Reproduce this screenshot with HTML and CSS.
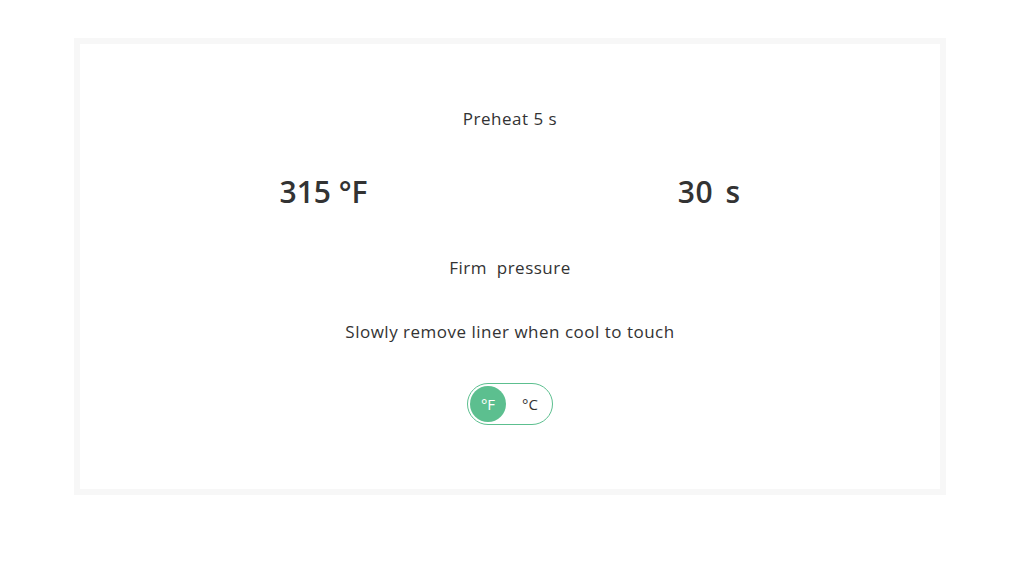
FILE: index.html
```html
<!DOCTYPE html>
<html>
<head>
<meta charset="utf-8">
<link rel="stylesheet" href="styles.css">
</head>
<body>
<div class="card">
  <div class="preheat">Preheat 5 s</div>
  <div class="values">
    <div class="value">315 °F</div>
    <div class="value time">30 s</div>
  </div>
  <div class="pressure">Firm&nbsp; pressure</div>
  <div class="note">Slowly remove liner when cool to touch</div>
  <div class="toggle">
    <span class="opt active">°F</span>
    <span class="opt">°C</span>
  </div>
</div>
</body>
</html>
```
FILE: styles.css
```css
html, body { margin: 0; padding: 0; background: #fff; }
body {
  font-family: "Open Sans", "Lato", sans-serif;
  color: #333;
  padding: 38px 0 0 74px;
}
.card {
  box-sizing: border-box;
  width: 872px;
  height: 457px;
  border: 6px solid #f7f7f7;
  background: #fff;
  display: flex;
  flex-direction: column;
  align-items: center;
}
.preheat, .pressure, .note {
  font-size: 17px;
  letter-spacing: 0.5px;
  line-height: 20px;
}
.preheat { margin-top: 65px; }
.values {
  margin-top: 43px;
  width: 461px;
  display: flex;
  justify-content: space-between;
  font-size: 30px;
  font-weight: 600;
  line-height: 40px;
  color: #333;
}
.value.time { word-spacing: 4px; letter-spacing: 0.5px; }
.pressure { margin-top: 46px; }
.note { margin-top: 44px; }
.toggle {
  margin-top: 41px;
  box-sizing: border-box;
  width: 86px;
  height: 42px;
  border: 1.5px solid #5cbf8f;
  border-radius: 21px;
  display: flex;
  align-items: center;
  padding: 0 2px;
  gap: 6px;
}
.opt {
  width: 36px;
  height: 36px;
  border-radius: 50%;
  display: flex;
  align-items: center;
  justify-content: center;
  font-size: 15px;
  color: #333;
}
.opt.active {
  background: #5cbf8f;
  color: #fff;
}
```
